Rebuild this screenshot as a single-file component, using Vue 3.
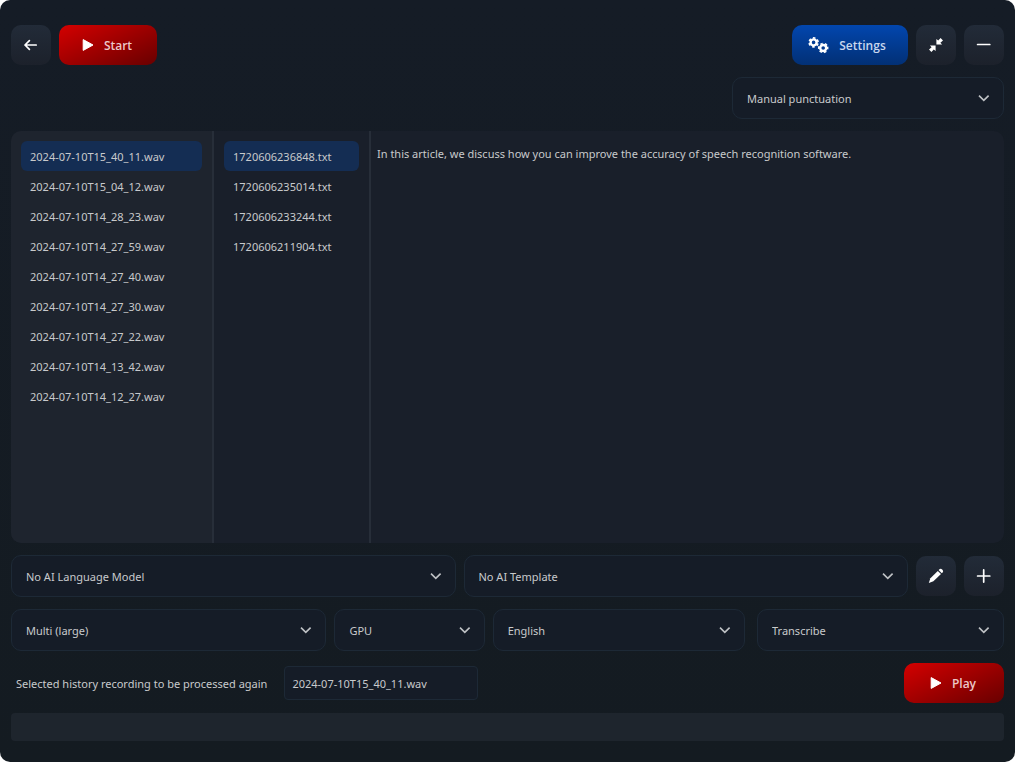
<script setup>
import { ref } from 'vue'

const recordings = [
  '2024-07-10T15_40_11.wav',
  '2024-07-10T15_04_12.wav',
  '2024-07-10T14_28_23.wav',
  '2024-07-10T14_27_59.wav',
  '2024-07-10T14_27_40.wav',
  '2024-07-10T14_27_30.wav',
  '2024-07-10T14_27_22.wav',
  '2024-07-10T14_13_42.wav',
  '2024-07-10T14_12_27.wav',
]
const transcripts = [
  '1720606236848.txt',
  '1720606235014.txt',
  '1720606233244.txt',
  '1720606211904.txt',
]
const aiSelects = [
  { label: 'AI language model', value: 'No AI Language Model' },
  { label: 'AI template', value: 'No AI Template' },
]
const engineSelects = [
  { label: 'Speech model', value: 'Multi (large)' },
  { label: 'Device', value: 'GPU' },
  { label: 'Language', value: 'English' },
]

const recording = ref(recordings[0])
const transcript = ref(transcripts[0])
const text = ref('In this article, we discuss how you can improve the accuracy of speech recognition software.')
</script>

<template>
  <main class="window">
    <header class="bar">
      <button class="btn icon-btn" type="button" aria-label="Back">
        <svg width="16" height="16" viewBox="0 0 16 16" class="stroke"><path d="M13.2 8H2M6.4 3.6L2 8L6.4 12.4" /></svg>
      </button>
      <button class="btn red" type="button">
        <svg width="12" height="14" viewBox="0 0 12 14"><path d="M1.2 1.6L11 7L1.2 12.4Z" class="solid-round" /></svg>
        <span>Start</span>
      </button>
      <span class="spacer"></span>
      <button class="btn blue" type="button">
        <svg width="21" height="18" viewBox="0 0 21 18">
          <g fill="none" stroke="#fff">
            <circle cx="5.6" cy="6.4" r="3" stroke-width="2.4" />
            <circle cx="5.6" cy="6.4" r="4.5" stroke-width="1.6" stroke-dasharray="2.6 2.112" transform="rotate(14 5.6 6.4)" />
            <circle cx="15.2" cy="12" r="3" stroke-width="2.4" />
            <circle cx="15.2" cy="12" r="4.5" stroke-width="1.6" stroke-dasharray="2.6 2.112" transform="rotate(-16 15.2 12)" />
          </g>
        </svg>
        <span>Settings</span>
      </button>
      <button class="btn icon-btn" type="button" aria-label="Compact view">
        <svg width="16" height="16" viewBox="0 0 16 16" fill="#fff">
          <path d="M8.4 1.9L10.2 3.6L12.6 1L15 3.4L12.4 5.8L14.1 7.6H8.4Z" />
          <path d="M7.6 14.1L5.8 12.4L3.4 15L1 12.6L3.6 10.2L1.9 8.4H7.6Z" />
        </svg>
      </button>
      <button class="btn icon-btn" type="button" aria-label="Minimize">
        <svg width="16" height="16" viewBox="0 0 16 16" class="stroke"><path d="M1.6 7.5H13.8" /></svg>
      </button>
    </header>

    <div class="bar end">
      <span class="select punctuation">
        <select aria-label="Punctuation"><option>Manual punctuation</option></select>
        <svg width="12" height="8" viewBox="0 0 12 8"><path d="M1 1.6L5.8 6.4L10.6 1.6" /></svg>
      </span>
    </div>

    <section class="panel">
      <ul class="files first">
        <li v-for="name in recordings" :key="name">
          <button type="button" :class="{ active: name === recording }" @click="recording = name">{{ name }}</button>
        </li>
      </ul>
      <ul class="files">
        <li v-for="name in transcripts" :key="name">
          <button type="button" :class="{ active: name === transcript }" @click="transcript = name">{{ name }}</button>
        </li>
      </ul>
      <textarea v-model="text" aria-label="Transcript" spellcheck="false"></textarea>
    </section>

    <div class="bar">
      <span v-for="item in aiSelects" :key="item.label" class="select grow">
        <select :aria-label="item.label"><option>{{ item.value }}</option></select>
        <svg width="12" height="8" viewBox="0 0 12 8"><path d="M1 1.6L5.8 6.4L10.6 1.6" /></svg>
      </span>
      <button class="btn icon-btn" type="button" aria-label="Edit template">
        <svg width="16" height="16" viewBox="0 0 16 16" fill="#fff">
          <path d="M9.8 2.9L13 6.1L5.4 13.2L0.8 15L2.4 10.3Z" />
          <path d="M10.6 2.1L11.8 1.1Q13 0.4 14.1 1.4L14.6 1.9Q15.6 3 14.8 4.2L13.8 5.3Z" />
        </svg>
      </button>
      <button class="btn icon-btn" type="button" aria-label="Add template">
        <svg width="16" height="16" viewBox="0 0 16 16" class="stroke"><path d="M1.6 8H13.8M7.7 1.9V14.1" /></svg>
      </button>
    </div>

    <div class="engine">
      <div class="engine-main">
        <span v-for="item in engineSelects" :key="item.label" class="select">
          <select :aria-label="item.label"><option>{{ item.value }}</option></select>
          <svg width="12" height="8" viewBox="0 0 12 8"><path d="M1 1.6L5.8 6.4L10.6 1.6" /></svg>
        </span>
      </div>
      <span class="select">
        <select aria-label="Task"><option>Transcribe</option></select>
        <svg width="12" height="8" viewBox="0 0 12 8"><path d="M1 1.6L5.8 6.4L10.6 1.6" /></svg>
      </span>
    </div>

    <footer>
      <div class="bar">
        <label for="history">Selected history recording to be processed again</label>
        <input id="history" v-model="recording" type="text" readonly />
        <span class="spacer"></span>
        <button class="btn red play" type="button">
          <svg width="12" height="14" viewBox="0 0 12 14"><path d="M1.2 1.6L11 7L1.2 12.4Z" class="solid-round" /></svg>
          <span>Play</span>
        </button>
      </div>
      <div class="progress" role="progressbar" aria-label="Progress" aria-valuenow="0"></div>
    </footer>
  </main>
</template>

<style>
body {
  background: #fff;
}
</style>

<style scoped>
.window,
.window * {
  box-sizing: border-box;
}
.window {
  min-height: 100vh;
  padding: 25px 11px 21px;
  display: flex;
  flex-direction: column;
  gap: 12px;
  border-radius: 10px;
  background: linear-gradient(#151c26, #141b21);
  color: #c8cacc;
  font: 11px/16px "Noto Sans", "Open Sans", sans-serif;
}
button,
select,
input,
textarea {
  font: inherit;
  color: inherit;
  margin: 0;
}
svg {
  display: block;
  flex: none;
}
.bar {
  display: flex;
  align-items: center;
  gap: 8px;
}
.end {
  justify-content: flex-end;
}
.spacer {
  flex: 1;
}
.btn {
  height: 40px;
  padding: 0 18px 0 16px;
  border: 0;
  border-radius: 10px;
  display: flex;
  align-items: center;
  justify-content: center;
  gap: 10px;
  font: 600 12px/16px "Open Sans", "Noto Sans", sans-serif;
}
.btn span {
  padding-top: 2px;
}
.icon-btn {
  width: 40px;
  padding: 0;
  background: linear-gradient(#222b38, #1c212b);
}
.red {
  min-width: 98px;
  background: linear-gradient(155deg, #d40000, #680000);
  color: #ecc8c8;
}
.play {
  min-width: 100px;
}
.blue {
  min-width: 116px;
  padding-right: 22px;
  background: linear-gradient(#0246ae, #023075);
  color: #c8d6ee;
}
.stroke {
  fill: none;
  stroke: #fff;
  stroke-width: 1.7;
  stroke-linecap: round;
  stroke-linejoin: round;
}
.solid-round {
  fill: #fff;
  stroke: #fff;
  stroke-width: 1;
  stroke-linejoin: round;
}
.select {
  display: grid;
  align-items: center;
  min-width: 0;
}
.select > * {
  grid-area: 1 / 1;
}
.select select {
  appearance: none;
  width: 100%;
  height: 42px;
  padding: 2px 32px 0 14px;
  border: 1px solid #1d2936;
  border-radius: 10px;
  background: #151c27;
}
.select svg {
  justify-self: end;
  margin-right: 14px;
  pointer-events: none;
  fill: none;
  stroke: #bfc2c5;
  stroke-width: 1.6;
}
.grow {
  flex: 1;
}
.punctuation {
  width: 272px;
}
.panel {
  flex: 1;
  display: grid;
  grid-template-columns: 203fr 157fr 633fr;
  border-radius: 10px;
  overflow: hidden;
  background: #191f2a;
}
.files {
  list-style: none;
  margin: 0;
  padding: 10px;
  border-right: 2px solid #272e39;
}
.first {
  background: #1e242e;
}
.files button {
  display: block;
  width: 100%;
  height: 30px;
  padding: 2px 9px 0;
  border: 0;
  border-radius: 6px;
  background: none;
  text-align: left;
}
.files .active {
  background: #142d53;
}
textarea {
  width: 100%;
  padding: 15px 6px;
  border: 0;
  outline: 0;
  resize: none;
  background: none;
}
.engine {
  display: grid;
  grid-template-columns: 734fr 247fr;
  gap: 12px;
}
.engine-main {
  display: grid;
  grid-template-columns: 315fr 150fr 252fr;
  gap: 8px;
}
label {
  padding: 2px 9px 0 5px;
}
input {
  width: 194px;
  height: 34px;
  padding: 0 7px;
  border: 1px solid #1d2936;
  border-radius: 4px;
  background: #151c27;
}
.progress {
  margin-top: 10px;
  height: 28px;
  border-radius: 4px;
  background: #1e252d;
}
</style>
